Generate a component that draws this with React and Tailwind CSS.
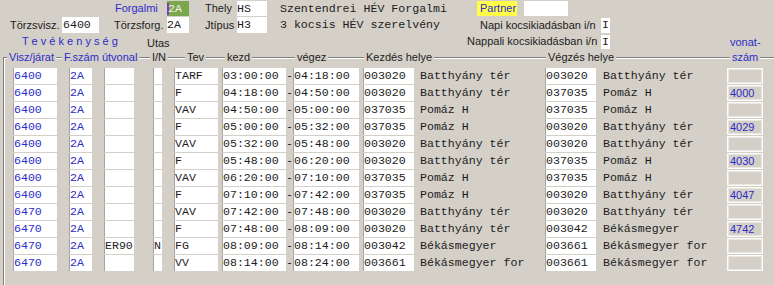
const rows = [
  ["6400", "2A", "", "", "TARF", "03:00:00", "04:18:00", "003020", "Batthyány tér", "003020", "Batthyány tér", ""],
  ["6400", "2A", "", "", "F", "04:18:00", "04:50:00", "003020", "Batthyány tér", "037035", "Pomáz H", "4000"],
  ["6400", "2A", "", "", "VAV", "04:50:00", "05:00:00", "037035", "Pomáz H", "037035", "Pomáz H", ""],
  ["6400", "2A", "", "", "F", "05:00:00", "05:32:00", "037035", "Pomáz H", "003020", "Batthyány tér", "4029"],
  ["6400", "2A", "", "", "VAV", "05:32:00", "05:48:00", "003020", "Batthyány tér", "003020", "Batthyány tér", ""],
  ["6400", "2A", "", "", "F", "05:48:00", "06:20:00", "003020", "Batthyány tér", "037035", "Pomáz H", "4030"],
  ["6400", "2A", "", "", "VAV", "06:20:00", "07:10:00", "037035", "Pomáz H", "037035", "Pomáz H", ""],
  ["6400", "2A", "", "", "F", "07:10:00", "07:42:00", "037035", "Pomáz H", "003020", "Batthyány tér", "4047"],
  ["6470", "2A", "", "", "VAV", "07:42:00", "07:48:00", "003020", "Batthyány tér", "003020", "Batthyány tér", ""],
  ["6470", "2A", "", "", "F", "07:48:00", "08:09:00", "003020", "Batthyány tér", "003042", "Békásmegyer", "4742"],
  ["6470", "2A", "ER90", "N", "FG", "08:09:00", "08:14:00", "003042", "Békásmegyer", "003661", "Békásmegyer for", ""],
  ["6470", "2A", "", "", "VV", "08:14:00", "08:24:00", "003661", "Békásmegyer for", "003661", "Békásmegyer for", ""],
];

// fehér beviteli mező
function Cell({ cls, children }) {
  return (
    <div className={"shrink-0 flex items-center bg-white border-l border-[#a4a4a4] whitespace-nowrap overflow-hidden " + cls}>
      {children}
    </div>
  );
}

function Gap({ cls }) {
  return <div className={"shrink-0 " + cls} />;
}

function Row({ r }) {
  return (
    <div className="flex h-[16px] mb-[1px] font-['Liberation_Mono',monospace] text-[11.6px] text-[#1c1c1c]">
      <Gap cls="w-[9px]" />
      <Cell cls="w-[44px] text-[#2c2cc8]">{r[0]}</Cell>
      <Gap cls="w-[12px]" />
      <Cell cls="w-[23px] text-[#2c2cc8]">{r[1]}</Cell>
      <Gap cls="w-[12px]" />
      <Cell cls="w-[30px]">{r[2]}</Cell>
      <Gap cls="w-[19px]" />
      <Cell cls="w-[9px]">{r[3]}</Cell>
      <Gap cls="w-[12px]" />
      <Cell cls="w-[44px]">{r[4]}</Cell>
      <Gap cls="w-[4px]" />
      <Cell cls="w-[64px]">{r[5]}</Cell>
      <div className="w-[7px] shrink-0 flex items-center justify-center">-</div>
      <Cell cls="w-[66px]">{r[6]}</Cell>
      <Gap cls="w-[4px]" />
      <Cell cls="w-[51px]">{r[7]}</Cell>
      <Gap cls="w-[6px]" />
      <div className="w-[125px] shrink-0 flex items-center whitespace-nowrap overflow-hidden">{r[8]}</div>
      <Cell cls="w-[51px]">{r[9]}</Cell>
      <Gap cls="w-[7px]" />
      <div className="w-[124px] shrink-0 flex items-center whitespace-nowrap overflow-hidden">{r[10]}</div>
      <div className="w-[36px] shrink-0 flex items-center pl-[2px] border border-[#fbfbfa] shadow-[inset_0_0_0_1px_#e9e7e1] font-['Liberation_Sans',sans-serif] text-[11px] text-[#2c2cc8]">
        {r[11]}
      </div>
    </div>
  );
}

export default function App() {
  return (
    <div className="w-[774px] h-[285px] overflow-hidden bg-[#d4d0c8] pt-[1px] font-['Liberation_Sans',Arial,sans-serif] text-[11px] text-[#1c1c1c]">

      {/* 1. sor */}
      <div className="flex h-[15px] items-center">
        <Gap cls="w-[115px]" />
        <div className="w-[52px] shrink-0 text-[#2c2cc8]">Forgalmi</div>
        <div className="w-[22px] h-[15px] shrink-0 flex items-center bg-[#7aa64c] font-['Liberation_Mono',monospace] text-[11.6px] text-[#f1f1ea]">
          <span className="w-[2px] h-[12px] bg-[#7a3cc0] mr-[-1px]" />
          2A
        </div>
        <Gap cls="w-[16px]" />
        <div className="w-[32px] shrink-0">Thely</div>
        <div className="w-[30px] h-[15px] shrink-0 flex items-center bg-white font-['Liberation_Mono',monospace] text-[11.6px]">HS</div>
        <Gap cls="w-[13px]" />
        <div className="w-[197px] shrink-0 font-['Liberation_Mono',monospace] text-[11.6px] whitespace-nowrap">Szentendrei HÉV Forgalmi</div>
        <div className="w-[40px] h-[15px] shrink-0 flex items-center pl-[3px] bg-[#ffff48] text-[#2c2cc8]">Partner</div>
        <Gap cls="w-[7px]" />
        <div className="w-[44px] h-[15px] shrink-0 bg-white" />
      </div>

      {/* 2. sor */}
      <div className="mt-[1px] flex h-[16px] items-center">
        <Gap cls="w-[10px]" />
        <div className="w-[52px] shrink-0">Törzsvisz.</div>
        <div className="w-[37px] h-[16px] shrink-0 flex items-center pl-[1px] bg-white font-['Liberation_Mono',monospace] text-[11.6px]">6400</div>
        <Gap cls="w-[15px]" />
        <div className="w-[53px] shrink-0">Törzsforg.</div>
        <div className="w-[22px] h-[16px] shrink-0 flex items-center bg-white font-['Liberation_Mono',monospace] text-[11.6px]">2A</div>
        <Gap cls="w-[16px]" />
        <div className="w-[32px] shrink-0">Jtípus</div>
        <div className="w-[30px] h-[16px] shrink-0 flex items-center bg-white font-['Liberation_Mono',monospace] text-[11.6px]">H3</div>
        <Gap cls="w-[13px]" />
        <div className="w-[200px] shrink-0 font-['Liberation_Mono',monospace] text-[11.6px] whitespace-nowrap">3 kocsis HÉV szerelvény</div>
        <div className="w-[113px] shrink-0 text-right whitespace-nowrap">Napi kocsikiadásban i/n</div>
        <Gap cls="w-[8px]" />
        <div className="w-[9px] h-[15px] shrink-0 flex items-center justify-center bg-white font-['Liberation_Mono',monospace] text-[11.6px]">I</div>
      </div>

      {/* 3. sor */}
      <div className="mt-[1px] flex h-[16px]">
        <Gap cls="w-[22px]" />
        <div className="w-[125px] shrink-0 leading-[14px] text-[#2c2cc8] whitespace-pre">T e v é k e n y s é g</div>
        <div className="w-[320px] shrink-0 pt-[2px] leading-[14px]">Utas</div>
        <div className="w-[126px] shrink-0 leading-[15px] text-right whitespace-nowrap">Nappali kocsikiadásban i/n</div>
        <Gap cls="w-[8px]" />
        <div className="w-[9px] h-[14px] mt-[1px] shrink-0 flex items-center justify-center bg-white font-['Liberation_Mono',monospace] text-[11.6px]">I</div>
        <Gap cls="w-[120px]" />
        <div className="leading-[16px] text-[#2c2cc8]">vonat-</div>
      </div>

      {/* Tevékenység keret */}
      <div className="mt-[7px] ml-[3px] h-[300px] border-t border-l border-[#808080] shadow-[inset_1px_1px_0_#ffffff]">

        <div className="-mt-[7px] flex h-[13px] leading-[13px] whitespace-nowrap">
          <Gap cls="w-[3px]" />
          <div className="w-[55px] shrink-0"><span className="bg-[#d4d0c8] px-[2px] text-[#2c2cc8]">Visz/járat</span></div>
          <div className="w-[88px] shrink-0"><span className="bg-[#d4d0c8] px-[2px] text-[#2c2cc8]">F.szám útvonal</span></div>
          <div className="w-[35px] shrink-0"><span className="bg-[#d4d0c8] px-[2px]">I/N</span></div>
          <div className="w-[40px] shrink-0"><span className="bg-[#d4d0c8] px-[2px]">Tev</span></div>
          <div className="w-[70px] shrink-0"><span className="bg-[#d4d0c8] px-[2px]">kezd</span></div>
          <div className="w-[69px] shrink-0"><span className="bg-[#d4d0c8] px-[2px]">végez</span></div>
          <div className="w-[182px] shrink-0"><span className="bg-[#d4d0c8] px-[2px]">Kezdés helye</span></div>
          <div className="w-[184px] shrink-0"><span className="bg-[#d4d0c8] px-[2px]">Végzés helye</span></div>
          <div className="shrink-0"><span className="bg-[#d4d0c8] px-[2px] text-[#2c2cc8]">szám</span></div>
        </div>

        <div className="mt-[4px]">
          {rows.map((r, i) => (
            <Row key={i} r={r} />
          ))}
        </div>
      </div>
    </div>
  );
}
